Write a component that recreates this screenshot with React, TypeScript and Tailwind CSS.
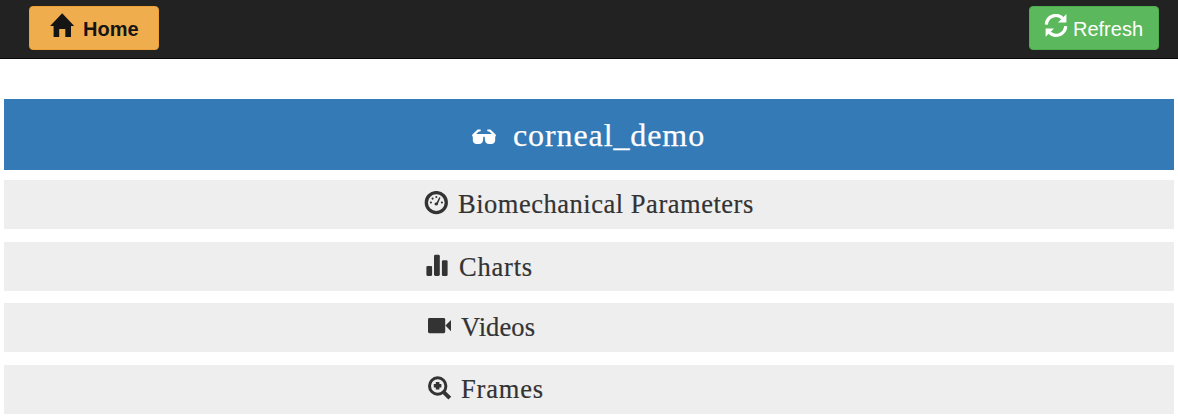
import type { ReactNode } from 'react';

const HomeIcon = () => (
  <svg className="block h-6 w-6 shrink-0" viewBox="0 0 24 24" fill="currentColor">
    <path d="M12.2 .2 24.2 12.9H21V24H15.3V16H9.2V24H3.6V12.9H.1Z" />
  </svg>
);

const RefreshIcon = () => (
  <svg className="block h-6 w-6 shrink-0" viewBox="0 0 24 24">
    <g fill="none" stroke="currentColor" strokeWidth="3.2">
      <path d="M2.3 10.6A9.6 9.6 0 0 1 18.9 4.6" />
      <path d="M21.7 12.2A9.6 9.6 0 0 1 5.1 18.2" />
    </g>
    <path fill="currentColor" d="M22.4 0V8.4H14ZM1.6 22.8V14.4H10Z" />
  </svg>
);

const SunglassesIcon = () => (
  <svg className="block h-6 w-6 shrink-0" viewBox="0 0 24 24" fill="currentColor">
    <path d="M5.6 4.4H8.6Q9.2 5.8 8.2 6.4H6.7L4.2 8.9H19.8L17.3 6.4H15.8Q14.8 5.8 15.4 4.4H18.4L23.6 9.4Q24.4 10.6 23.2 11.7V15.5Q22.6 18.9 19.5 18.9H16.8Q13.6 18.9 13 15.5L12.7 11.8H11.3L11 15.5Q10.4 18.9 7.2 18.9H4.5Q1.4 18.9 .8 15.5V11.7Q-.4 10.6 .4 9.4Z" />
  </svg>
);

const DashboardIcon = () => (
  <svg className="block h-6 w-6 shrink-0" viewBox="0 0 24 24">
    <circle cx="12.3" cy="11.6" r="10" fill="none" stroke="currentColor" strokeWidth="3.3" />
    <g fill="currentColor">
      <circle cx="6.9" cy="11.5" r="1.1" />
      <circle cx="8.6" cy="7.6" r="1.1" />
      <circle cx="12.3" cy="5.9" r="1" />
      <circle cx="17.9" cy="11.5" r="1.1" />
      <path d="M15.2 6.2 16.5 6.7 14.2 11.9Q14.3 14.4 12.3 14.5 9.9 14 10.8 12L12.8 11.2Z" />
    </g>
  </svg>
);

const StatsIcon = () => (
  <svg className="block h-6 w-6 shrink-0" viewBox="0 0 24 24" fill="currentColor">
    <rect x="1.4" y="13" width="5.7" height="9.9" rx="1.1" />
    <rect x="9" y="1.8" width="5.8" height="21.1" rx="1.4" />
    <rect x="16.9" y="7.3" width="5.7" height="15.6" rx="1.2" />
  </svg>
);

const VideoIcon = () => (
  <svg className="block h-6 w-6 shrink-0" viewBox="0 0 24 24" fill="currentColor">
    <rect x="0" y="4" width="17.2" height="15.2" rx="1.4" />
    <path d="M17.4 11.5 23 6V17.3Z" />
  </svg>
);

const ZoomInIcon = () => (
  <svg className="block h-6 w-6 shrink-0" viewBox="0 0 24 24" fill="none" stroke="currentColor">
    <circle cx="9.7" cy="10" r="8.2" strokeWidth="3" />
    <path d="M9.6 6V13.6M5.8 9.8H13.4" strokeWidth="3.6" />
    <path d="M15.4 15.8 21.8 22.2" strokeWidth="4" />
  </svg>
);

type RowProps = { icon: ReactNode; inset: string; label: string; text: string };

const Row = ({ icon, inset, label, text }: RowProps) => (
  <a className={`flex h-[49px] items-start bg-[#eee] pt-[11px] text-[#333] ${inset}`}>
    {icon}
    <span className={`-mt-[2px] whitespace-nowrap text-[26.5px] leading-[30px] [-webkit-text-stroke:0.2px_#333] ${text}`}>{label}</span>
  </a>
);

export default function App() {
  return (
    <div className="h-[419px] overflow-hidden bg-white font-['Georgia','Liberation_Serif',serif]">
      <nav className="flex h-[59px] items-start justify-between border-b border-[#080808] bg-[#222] pl-[29px] pr-[19px] pt-1.5 font-['Liberation_Sans',Arial,sans-serif] text-[20px]">
        <button className="flex h-11 w-[130px] items-start rounded-[4px] border border-[#eea236] bg-[#f0ad4e] pl-5 pt-1.5 text-[#151515]">
          <HomeIcon />
          <span className="ml-[9px] mt-1 font-bold leading-6">Home</span>
        </button>
        <button className="flex h-11 w-[130px] items-start rounded-[4px] border border-[#4cae4c] bg-[#5cb85c] pl-[14px] pt-[7px] text-white">
          <RefreshIcon />
          <span className="ml-[5px] mt-[3px] leading-6">Refresh</span>
        </button>
      </nav>
      <main className="px-1 pt-10">
        <h1 className="flex h-[71px] items-start bg-[#337ab7] pl-[468px] pt-[26px] text-white">
          <SunglassesIcon />
          <span className="-mt-[8px] ml-[17px] whitespace-nowrap text-[32px] leading-9 tracking-[0.9px] [-webkit-text-stroke:0.25px_#fff]">corneal_demo</span>
        </h1>
        <div className="mt-[10px] flex flex-col">
          <Row icon={<DashboardIcon />} inset="pl-[420px]" label="Biomechanical Parameters" text="ml-[10px] tracking-[0.52px]" />
          <div className="mt-[13px]">
            <Row icon={<StatsIcon />} inset="pl-[421px]" label="Charts" text="ml-[10px] mt-[-1px] tracking-[0.8px]" />
          </div>
          <div className="mt-3">
            <Row icon={<VideoIcon />} inset="pl-[424px]" label="Videos" text="ml-[9px] tracking-[0.1px]" />
          </div>
          <div className="mt-[13px]">
            <Row icon={<ZoomInIcon />} inset="pl-[424px]" label="Frames" text="ml-[9px] tracking-[0.8px]" />
          </div>
        </div>
      </main>
    </div>
  );
}
